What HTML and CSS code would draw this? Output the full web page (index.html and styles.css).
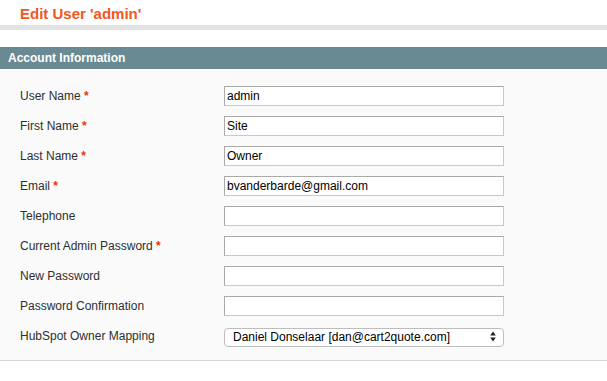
FILE: index.html
```html
<!DOCTYPE html>
<html>
<head>
<meta charset="utf-8">
<link rel="stylesheet" href="styles.css">
</head>
<body>
<div class="page-head"><h3 class="title">Edit User 'admin'</h3></div>
<div class="rule"></div>
<div class="entry-edit">
  <div class="section-head">Account Information</div>
  <div class="fieldset">
    <div class="row"><label class="label">User Name <em class="req">*</em></label><input class="field" type="text" value="admin"></div>
    <div class="row"><label class="label">First Name <em class="req">*</em></label><input class="field" type="text" value="Site"></div>
    <div class="row"><label class="label">Last Name <em class="req">*</em></label><input class="field" type="text" value="Owner"></div>
    <div class="row"><label class="label">Email <em class="req">*</em></label><input class="field" type="text" value="bvanderbarde@gmail.com"></div>
    <div class="row"><label class="label">Telephone</label><input class="field" type="text" value=""></div>
    <div class="row"><label class="label">Current Admin Password <em class="req">*</em></label><input class="field" type="password" value=""></div>
    <div class="row"><label class="label">New Password</label><input class="field" type="password" value=""></div>
    <div class="row"><label class="label">Password Confirmation</label><input class="field" type="password" value=""></div>
    <div class="row"><label class="label">HubSpot Owner Mapping</label>
      <div class="select-wrap">
        <select class="select"><option>Daniel Donselaar [dan@cart2quote.com]</option></select>
        <svg class="arrows" width="6" height="11" viewBox="0 0 6 11"><path d="M3 0.5 L5.8 4.5 L0.2 4.5 Z" fill="#222"/><path d="M3 10.5 L5.8 6.5 L0.2 6.5 Z" fill="#222"/></svg>
      </div>
    </div>
  </div>
</div>
</body>
</html>
```
FILE: styles.css
```css
html, body {
  margin: 0;
  padding: 0;
  background: #fff;
  font-family: "Liberation Sans", Arial, sans-serif;
}
.page-head {
  height: 25px;
  box-sizing: border-box;
  padding: 5px 0 0 20px;
}
.title {
  margin: 0;
  font-size: 15px;
  line-height: 18px;
  font-weight: bold;
  color: #f4561c;
}
.rule {
  height: 5px;
  background: #e2e2e2;
  margin-bottom: 17px;
}
.section-head {
  height: 21px;
  padding: 1px 0 0 8px;
  line-height: 21px;
  background: #6a8a93;
  color: #fff;
  font-size: 12px;
  font-weight: bold;
  border-bottom: 1px solid #fff;
}
.fieldset {
  background: #fafafa;
  border-bottom: 1px solid #d6d6d6;
  padding: 16px 0 14px 20px;
  display: flex;
  flex-direction: column;
  gap: 10px;
}
.row {
  display: flex;
  align-items: center;
  height: 20px;
}
.label {
  width: 204px;
  font-size: 12px;
  line-height: 20px;
  color: #2f2f2f;
}
.req {
  font-style: normal;
  font-weight: bold;
  color: #eb340a;
}
.field {
  width: 280px;
  height: 20px;
  box-sizing: border-box;
  margin: 0;
  padding: 0 2px;
  border: 1px solid;
  border-color: #aaa #c8c8c8 #c8c8c8 #aaa;
  background: #fff;
  font-family: "Liberation Sans", Arial, sans-serif;
  font-size: 12px;
  color: #000;
  outline: none;
}
.select-wrap {
  position: relative;
  width: 280px;
  height: 19px;
}
.select {
  -webkit-appearance: none;
  appearance: none;
  width: 280px;
  height: 19px;
  box-sizing: border-box;
  margin: 0;
  padding: 0 0 0 8px;
  border: 1px solid #bdbdbd;
  border-radius: 4px;
  background: #fff;
  font-family: "Liberation Sans", Arial, sans-serif;
  font-size: 12px;
  line-height: 17px;
  color: #000;
}
.arrows {
  position: absolute;
  right: 8px;
  top: 4px;
}
```
